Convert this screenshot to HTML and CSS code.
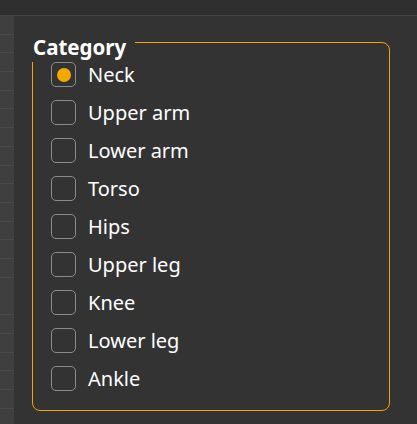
FILE: index.html
```html
<!DOCTYPE html>
<html>
<head>
<meta charset="utf-8">
<link rel="stylesheet" href="styles.css">
</head>
<body>
<div class="topbar"></div>
<div class="main">
  <div class="strip"></div>
  <div class="content">
    <div class="group">
      <div class="title">Category</div>
      <div class="list">
        <div class="row"><span class="box checked"><span class="dot"></span></span><span class="label">Neck</span></div>
        <div class="row"><span class="box"></span><span class="label">Upper arm</span></div>
        <div class="row"><span class="box"></span><span class="label">Lower arm</span></div>
        <div class="row"><span class="box"></span><span class="label">Torso</span></div>
        <div class="row"><span class="box"></span><span class="label">Hips</span></div>
        <div class="row"><span class="box"></span><span class="label">Upper leg</span></div>
        <div class="row"><span class="box"></span><span class="label">Knee</span></div>
        <div class="row"><span class="box"></span><span class="label">Lower leg</span></div>
        <div class="row"><span class="box"></span><span class="label">Ankle</span></div>
      </div>
    </div>
  </div>
</div>
</body>
</html>
```
FILE: styles.css
```css
html, body {
  margin: 0;
  padding: 0;
  background: #333333;
  height: 100%;
  overflow: hidden;
}
body {
  font-family: "Noto Sans", "Open Sans", sans-serif;
  color: #ffffff;
}
.topbar {
  height: 15px;
  background: #2f2f2f;
  border-bottom: 1px solid #444444;
}
.main {
  display: flex;
  height: 408px;
}
.strip {
  width: 14px;
  flex: none;
  background: repeating-linear-gradient(to bottom, #3f3f3f 0, #3f3f3f 17.7px, #4a4a4a 17.7px, #4a4a4a 18.7px);
}
.content {
  flex: 1;
  padding: 26px 0 0 18px;
}
.group {
  width: 356px;
  height: 367px;
  border: 1px solid #f5a300;
  border-radius: 8px;
}
.title {
  display: block;
  width: fit-content;
  box-sizing: border-box;
  margin: -13px 0 0 -2px;
  padding: 1px 9px 0 2px;
  height: 32px;
  line-height: 32px;
  background: #333333;
  font-weight: bold;
  font-size: 20.5px;
}
.list {
  display: flex;
  flex-direction: column;
  gap: 13px;
  padding-left: 18px;
}
.row {
  display: flex;
  align-items: center;
  height: 25px;
  gap: 12px;
}
.box {
  width: 23px;
  height: 23px;
  border: 1px solid #8c8c8c;
  border-radius: 5px;
  display: flex;
  align-items: center;
  justify-content: center;
  flex: none;
}
.dot {
  width: 14px;
  height: 14px;
  border-radius: 50%;
  background: #f5a800;
}
.label {
  font-size: 20px;
  line-height: 25px;
}
```
